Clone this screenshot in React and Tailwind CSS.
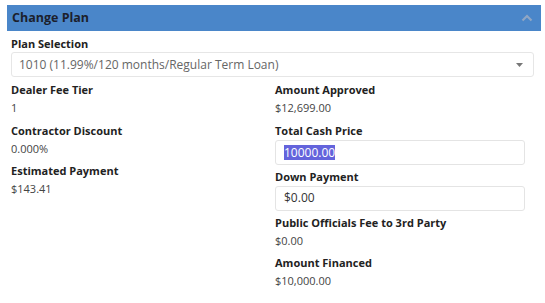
import React from 'react';

const font = { fontFamily: '"Open Sans", "Liberation Sans", sans-serif' };

function Field({ label, value }) {
  return (
    <div className="mb-[5.5px]">
      <div className="text-[11px] font-bold text-[#222] leading-[18px]">{label}</div>
      <div className="text-[11px] text-[#444] leading-[17px]">{value}</div>
    </div>
  );
}

function InputField({ label, children }) {
  return (
    <div className="mb-[3px]">
      <div className="text-[11px] font-bold text-[#222] leading-[18px]">{label}</div>
      <div className="w-[250px] h-[25px] border border-[#e4e4e4] rounded-[3px] bg-white flex items-center pl-[8px] text-[12px] text-[#333]">
        {children}
      </div>
    </div>
  );
}

export default function App() {
  return (
    <div className="w-[545px] h-[303px] bg-white pt-[5px] pl-[7px] pr-[4px]" style={font}>
      {/* Header */}
      <div className="h-[26px] bg-[#4a86c9] flex items-center justify-between pl-[5px] pr-[8px]">
        <span className="text-[12.5px] font-bold text-[#1c1f2c]">Change Plan</span>
        <svg width="12" height="8" viewBox="0 0 12 8">
          <path d="M1.5 6.5 L6 2 L10.5 6.5" fill="none" stroke="#8fa6c4" strokeWidth="2.2" />
        </svg>
      </div>

      <div className="pl-[4px] pr-[7px] pt-[4px]">
        <div className="text-[11px] font-bold text-[#222] leading-[17px]">Plan Selection</div>
        <div className="h-[25px] border border-[#e6e6e6] rounded-[3px] flex items-center justify-between pl-[7px] pr-[10px]">
          <span className="text-[12px] text-[#666]">1010 (11.99%/120 months/Regular Term Loan)</span>
          <svg width="7" height="4" viewBox="0 0 7 4">
            <path d="M0 0 H7 L3.5 4 Z" fill="#777" />
          </svg>
        </div>

        <div className="flex mt-[4px]">
          <div className="w-[264px]">
            <Field label="Dealer Fee Tier" value="1" />
            <Field label="Contractor Discount" value="0.000%" />
            <Field label="Estimated Payment" value="$143.41" />
          </div>
          <div className="flex-1">
            <Field label="Amount Approved" value="$12,699.00" />
            <InputField label="Total Cash Price">
              <span className="bg-[#6464dc] text-white leading-[15px]">10000.00</span>
            </InputField>
            <InputField label="Down Payment">$0.00</InputField>
            <Field label="Public Officials Fee to 3rd Party" value="$0.00" />
            <Field label="Amount Financed" value="$10,000.00" />
          </div>
        </div>
      </div>
    </div>
  );
}
